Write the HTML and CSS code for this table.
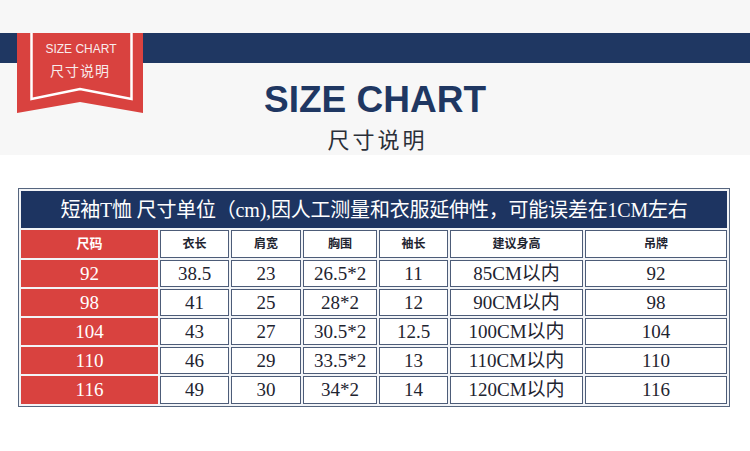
FILE: index.html
```html
<!DOCTYPE html>
<html lang="zh-CN">
<head>
    <meta charset="UTF-8">
    <meta name="viewport" content="width=device-width, initial-scale=1.0">
    <title>Size Chart</title>
    <link rel="stylesheet" href="styles.css">
</head>
<body>
    <header class="hero">
        <div class="band"></div>
        <div class="ribbon">
            <svg class="ribbon-shape" width="126" height="80" viewBox="0 0 126 80">
                <polygon points="0,0 126,0 126,80 63,69 0,80" fill="#d9423f"/>
                <polyline points="14.5,0 14.5,66 63,56 114.5,66 114.5,0" fill="none" stroke="#ffffff" stroke-width="2.5"/>
            </svg>
            <div class="ribbon-text">
                <span class="ribbon-en">SIZE CHART</span>
                <span class="ribbon-cn">尺寸说明</span>
            </div>
        </div>
        <h1 class="title">SIZE CHART</h1>
        <p class="subtitle">尺寸说明</p>
    </header>

    <table class="chart">
        <colgroup>
            <col style="width: 137px">
            <col style="width: 69px">
            <col style="width: 70px">
            <col style="width: 74px">
            <col style="width: 69px">
            <col style="width: 133px">
            <col style="width: 142px">
        </colgroup>
        <tr>
            <td class="caption" colspan="7">短袖T恤 尺寸单位（cm),因人工测量和衣服延伸性，可能误差在1CM左右</td>
        </tr>
        <tr class="head">
            <td class="size">尺码</td>
            <td>衣长</td>
            <td>肩宽</td>
            <td>胸围</td>
            <td>袖长</td>
            <td>建议身高</td>
            <td>吊牌</td>
        </tr>
        <tr class="row">
            <td class="size">92</td><td>38.5</td><td>23</td><td>26.5*2</td><td>11</td><td>85CM以内</td><td>92</td>
        </tr>
        <tr class="row">
            <td class="size">98</td><td>41</td><td>25</td><td>28*2</td><td>12</td><td>90CM以内</td><td>98</td>
        </tr>
        <tr class="row">
            <td class="size">104</td><td>43</td><td>27</td><td>30.5*2</td><td>12.5</td><td>100CM以内</td><td>104</td>
        </tr>
        <tr class="row">
            <td class="size">110</td><td>46</td><td>29</td><td>33.5*2</td><td>13</td><td>110CM以内</td><td>110</td>
        </tr>
        <tr class="row last">
            <td class="size">116</td><td>49</td><td>30</td><td>34*2</td><td>14</td><td>120CM以内</td><td>116</td>
        </tr>
    </table>
</body>
</html>
```

FILE: styles.css
```css
body {
    margin: 0;
    background: #ffffff;
    font-family: 'Liberation Sans', 'Noto Sans CJK SC', sans-serif;
}

.hero {
    position: relative;
    height: 155px;
    padding-top: 33px;
    box-sizing: border-box;
    background: #f7f7f7;
    text-align: center;
}

.band {
    height: 30px;
    background: #1f3762;
}

.ribbon {
    position: absolute;
    left: 17px;
    top: 33px;
    width: 126px;
    height: 80px;
}

.ribbon-shape {
    display: block;
}

.ribbon-text {
    position: absolute;
    top: 9px;
    left: 0;
    right: 0;
    display: flex;
    flex-direction: column;
    align-items: center;
    color: #f8ecec;
}

.ribbon-en {
    font-size: 12px;
    line-height: 14px;
    margin-left: 2px;
}

.ribbon-cn {
    font-family: 'Noto Sans CJK SC', sans-serif;
    font-size: 14px;
    line-height: 16px;
    margin-top: 6px;
    letter-spacing: 1px;
}

.title {
    margin: 17px 0 0;
    font-size: 37px;
    line-height: 40px;
    font-weight: bold;
    color: #1f3762;
}

.subtitle {
    margin: 6px 0 0;
    font-family: 'Noto Sans CJK SC', sans-serif;
    font-size: 22px;
    line-height: 24px;
    letter-spacing: 3px;
    padding-left: 5px;
    color: #2a2f38;
}

.chart {
    margin: 33px 0 0 18px;
    width: 712px;
    table-layout: fixed;
    border-collapse: separate;
    border-spacing: 2px;
    border: 1px solid #56657e;
    background: #f2f4f7;
}

.chart td {
    padding: 0;
    text-align: center;
    vertical-align: middle;
    line-height: 18px;
    box-sizing: border-box;
}

.caption {
    height: 37px;
    background: #1d3461;
    color: #ffffff;
    font-family: 'Liberation Serif', 'Noto Sans CJK SC', serif;
    font-size: 20px;
    letter-spacing: -0.2px;
}

.head td {
    height: 28px;
    border: 1px solid #4d5c78;
    background: #ffffff;
    color: #1e2430;
    font-size: 12px;
    font-weight: bold;
}

.row td {
    height: 27px;
    border: 1px solid #4d5c78;
    background: #ffffff;
    color: #1e2430;
    font-family: 'Liberation Serif', 'Noto Sans CJK SC', serif;
    font-size: 19px;
}

.row:first-of-type td,
.row.last td {
    height: 28px;
}

.chart td.size {
    border: none;
    background: #d9423f;
    color: #ffffff;
}

.head td.size {
    font-size: 13px;
}
```
